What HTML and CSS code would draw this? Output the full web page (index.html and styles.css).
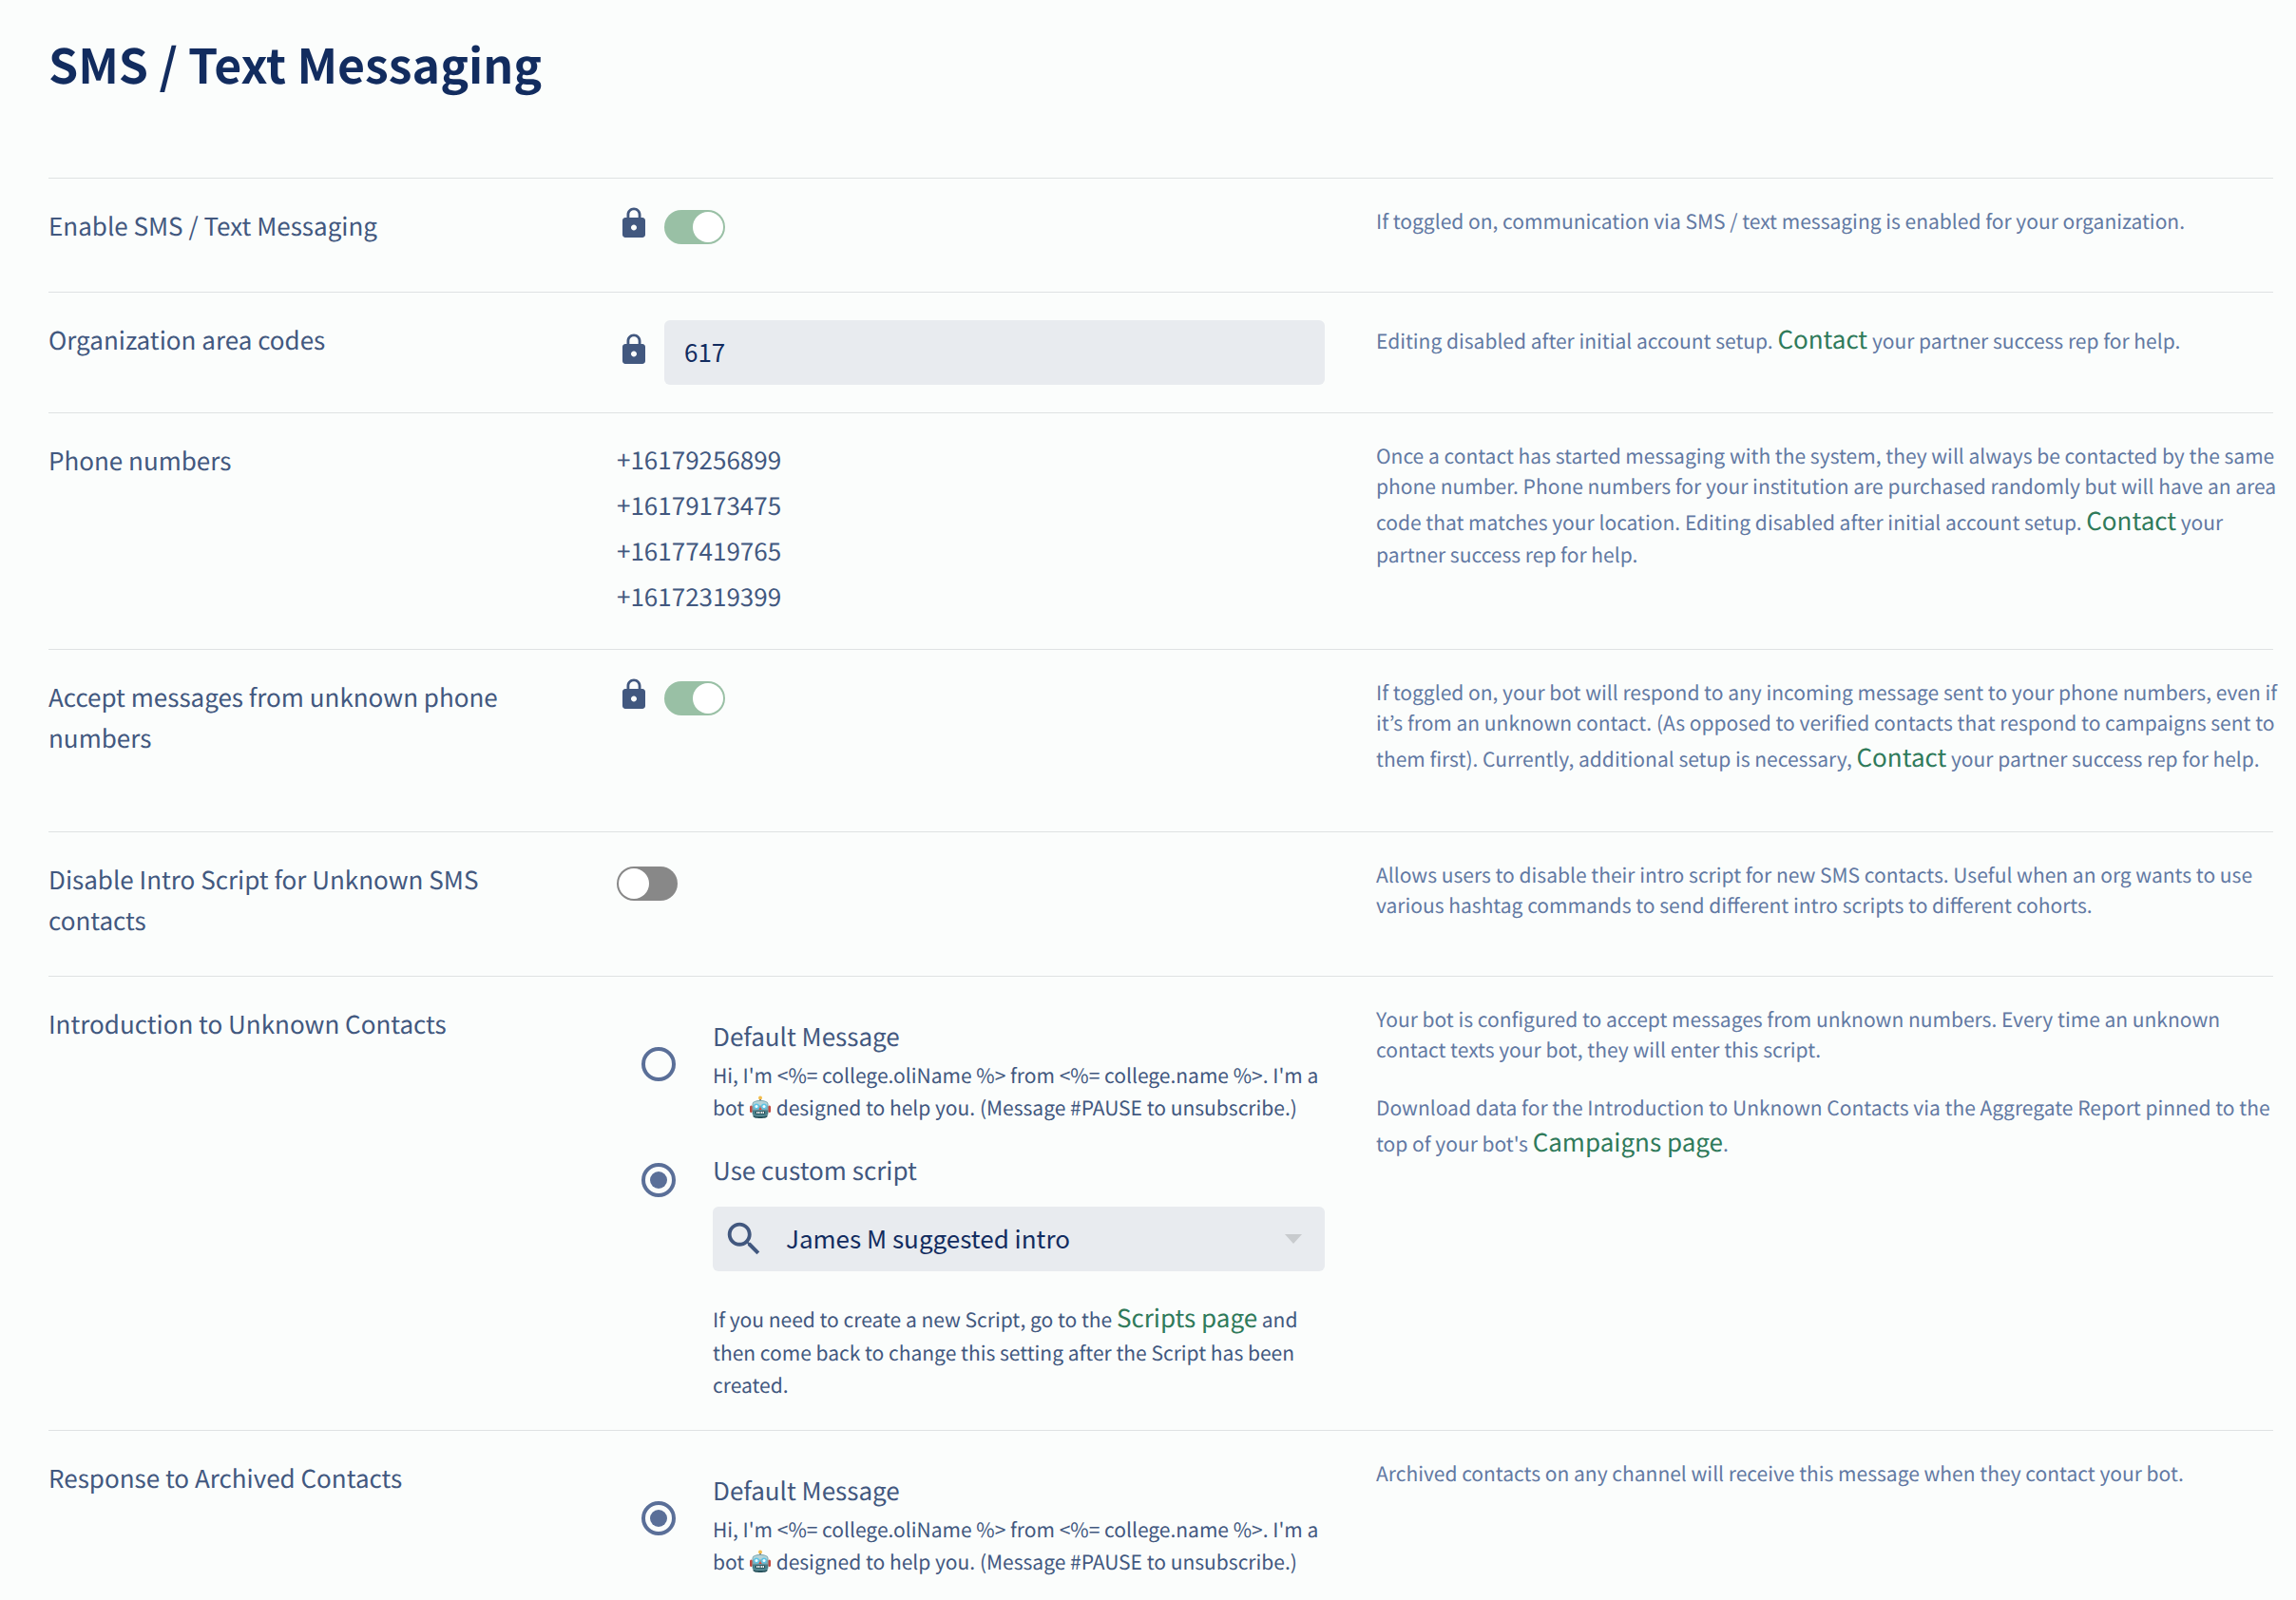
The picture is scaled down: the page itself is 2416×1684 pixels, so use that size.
FILE: index.html
```html
<!DOCTYPE html>
<html lang="en">
<head>
<meta charset="utf-8">
<meta name="viewport" content="width=device-width, initial-scale=1">
<title>SMS / Text Messaging</title>
<link rel="stylesheet" href="styles.css">
</head>
<body>
<svg class="sprite" aria-hidden="true">
  <symbol id="lock" viewBox="0 0 24 24"><path fill="currentColor" d="M18 8h-1V6c0-2.76-2.24-5-5-5S7 3.240 7 6v2H6c-1.100 0-2 .9-2 2v10c0 1.100.9 2 2 2h12c1.100 0 2-.9 2-2V10c0-1.100-.9-2-2-2zm-6 9c-1.100 0-2-.9-2-2s.9-2 2-2 2 .9 2 2-.9 2-2 2zm3.100-9H8.900V6c0-1.710 1.390-3.100 3.100-3.100s3.100 1.390 3.100 3.100v2z"/></symbol>
  <symbol id="search" viewBox="0 0 24 24"><path fill="currentColor" d="M15.500 14h-.79l-.28-.27C15.410 12.590 16 11.110 16 9.500 16 5.910 13.090 3 9.500 3S3 5.910 3 9.500 5.910 16 9.500 16c1.610 0 3.090-.59 4.230-1.570l.27.28v.79l5 4.990L20.490 19l-4.990-5zm-6 0C7.010 14 5 11.990 5 9.500S7.010 5 9.500 5 14 7.010 14 9.500 11.990 14 9.500 14z"/></symbol>
  <symbol id="robot" viewBox="0 0 44 48">
    <rect x="20" y="5" width="4" height="7" fill="#5b6b94"/>
    <circle cx="22" cy="5" r="4" fill="#f2bd4b"/>
    <rect x="0" y="21" width="6" height="15" rx="3" fill="#c4483f"/>
    <rect x="38" y="21" width="6" height="15" rx="3" fill="#c4483f"/>
    <path d="M7 40h30v4c0 2-5 4-15 4S7 46 7 44z" fill="#27535d"/>
    <path d="M5 19c0-6 6-9 17-9s17 3 17 9v19c0 4-5 6-17 6S5 42 5 38z" fill="#7fa9b1"/>
    <path d="M7 18c0-4 6-6 15-6s15 2 15 6v3H7z" fill="#b5d3d8"/>
    <path d="M6 31h32v7c0 3-5 5-16 5S6 41 6 38z" fill="#477f8a"/>
    <circle cx="14" cy="23" r="6" fill="#5fc3e4"/>
    <circle cx="30" cy="23" r="6" fill="#5fc3e4"/>
    <circle cx="14" cy="23" r="3" fill="#f4fdff"/>
    <circle cx="30" cy="23" r="3" fill="#f4fdff"/>
    <path d="M22 24l3 6h-6z" fill="#d8473c"/>
    <rect x="12" y="33" width="20" height="6" rx="2" fill="#24434b"/>
    <path d="M14 34h3v4h-3zM18 34h3v4h-3zM23 34h3v4h-3zM27 34h3v4h-3z" fill="#e6efef"/>
  </symbol>
</svg>

<main class="page">
  <h1 class="page-title">SMS / Text Messaging</h1>

  <section class="row">
    <label class="row-label" for="enable-sms">Enable SMS / Text Messaging</label>
    <div class="control locked">
      <svg class="lock" role="img" aria-label="Locked"><use href="#lock"/></svg>
      <input class="toggle" type="checkbox" role="switch" id="enable-sms" checked disabled>
    </div>
    <div class="help">
      <p>If toggled on, communication via SMS / text messaging is enabled for your organization.</p>
    </div>
  </section>

  <section class="row">
    <label class="row-label" for="area-codes">Organization area codes</label>
    <div class="control locked">
      <svg class="lock" role="img" aria-label="Locked"><use href="#lock"/></svg>
      <input class="field" type="text" id="area-codes" value="617" disabled>
    </div>
    <div class="help help-compact">
      <p>Editing disabled after initial account setup. <a href="#contact">Contact</a> your partner success rep for help.</p>
    </div>
  </section>

  <section class="row">
    <h2 class="row-label">Phone numbers</h2>
    <ul class="phones">
      <li>+16179256899</li>
      <li>+16179173475</li>
      <li>+16177419765</li>
      <li>+16172319399</li>
    </ul>
    <div class="help">
      <p>Once a contact has started messaging with the system, they will always be contacted by the same phone number. Phone numbers for your institution are purchased randomly but will have an area code that matches your location. Editing disabled after initial account setup. <a href="#contact">Contact</a> your partner success rep for help.</p>
    </div>
  </section>

  <section class="row">
    <label class="row-label" for="accept-unknown">Accept messages from unknown phone numbers</label>
    <div class="control locked">
      <svg class="lock" role="img" aria-label="Locked"><use href="#lock"/></svg>
      <input class="toggle" type="checkbox" role="switch" id="accept-unknown" checked disabled>
    </div>
    <div class="help">
      <p>If toggled on, your bot will respond to any incoming message sent to your phone numbers, even if it’s from an unknown contact. (As opposed to verified contacts that respond to campaigns sent to them first). Currently, additional setup is necessary, <a href="#contact">Contact</a> your partner success rep for help.</p>
    </div>
  </section>

  <section class="row">
    <label class="row-label" for="disable-intro">Disable Intro Script for Unknown SMS contacts</label>
    <div class="control control-single">
      <input class="toggle" type="checkbox" role="switch" id="disable-intro">
    </div>
    <div class="help">
      <p>Allows users to disable their intro script for new SMS contacts. Useful when an org wants to use various hashtag commands to send different intro scripts to different cohorts.</p>
    </div>
  </section>

  <section class="row">
    <h2 class="row-label">Introduction to Unknown Contacts</h2>
    <div class="options">
      <div class="option option-message">
        <input class="radio" type="radio" name="intro" id="intro-default">
        <label class="option-body" for="intro-default">
          <span class="option-title">Default Message</span>
          <span class="message">Hi, I'm &lt;%= college.oliName %&gt; from &lt;%= college.name %&gt;. I'm a bot <svg class="robot" role="img" aria-label="robot"><use href="#robot"/></svg> designed to help you. (Message #PAUSE to unsubscribe.)</span>
        </label>
      </div>
      <div class="option">
        <input class="radio" type="radio" name="intro" id="intro-custom" checked>
        <div class="option-body">
          <label class="option-title" for="intro-custom">Use custom script</label>
          <div class="picker">
            <svg class="search" aria-hidden="true"><use href="#search"/></svg>
            <select class="picker-select" aria-label="Custom script">
              <option>James M suggested intro</option>
            </select>
            <svg class="arrow" viewBox="0 0 18 10" aria-hidden="true"><path fill="currentColor" d="M0 0h18l-9 10z"/></svg>
          </div>
          <p class="message">If you need to create a new Script, go to the <a href="#scripts">Scripts page</a> and then come back to change this setting after the Script has been created.</p>
        </div>
      </div>
    </div>
    <div class="help">
      <p>Your bot is configured to accept messages from unknown numbers. Every time an unknown contact texts your bot, they will enter this script.</p>
      <p>Download data for the Introduction to Unknown Contacts via the Aggregate Report pinned to the top of your bot's <a href="#campaigns">Campaigns page</a>.</p>
    </div>
  </section>

  <section class="row row-last">
    <h2 class="row-label">Response to Archived Contacts</h2>
    <div class="options">
      <div class="option option-message">
        <input class="radio" type="radio" name="archived" id="archived-default" checked>
        <label class="option-body" for="archived-default">
          <span class="option-title">Default Message</span>
          <span class="message">Hi, I'm &lt;%= college.oliName %&gt; from &lt;%= college.name %&gt;. I'm a bot <svg class="robot" role="img" aria-label="robot"><use href="#robot"/></svg> designed to help you. (Message #PAUSE to unsubscribe.)</span>
        </label>
      </div>
    </div>
    <div class="help">
      <p>Archived contacts on any channel will receive this message when they contact your bot.</p>
    </div>
  </section>
</main>
</body>
</html>
```
FILE: styles.css
```css
* {
  box-sizing: border-box;
}

body {
  margin: 0;
  background: #fbfdfc;
  color: #42587f;
  font: 26px/43px "Noto Sans CJK KR", "Noto Sans", sans-serif;
  text-rendering: geometricPrecision;
}

h1, h2, p, ul {
  margin: 0;
  padding: 0;
}

a {
  color: #2f7a5a;
  font-size: 26px;
  line-height: 40px;
  text-decoration: none;
}

.sprite {
  display: none;
}

.page {
  padding: 30px 24px 0 51px;
}

.page-title {
  margin-bottom: 82px;
  color: #122c5f;
  font-size: 50px;
  line-height: 75px;
  font-weight: 700;
}

/* Rows: label, control, explanation */

.row {
  display: grid;
  grid-template-columns: 544fr 745fr 944fr;
  column-gap: 54px;
  align-items: start;
  padding-bottom: 29px;
  border-top: 1px solid #dfe2e3;
}

.row-last {
  padding-bottom: 0;
}

.row-label {
  padding-top: 28px;
  font-size: 26px;
  line-height: 43px;
  font-weight: 400;
}

.help {
  margin-right: -10px;
  padding-top: 29px;
  color: #6279a3;
  font-size: 21px;
  line-height: 32px;
}

.help p {
  margin-bottom: 29px;
}

.help-compact p {
  margin-bottom: 0;
}

.control {
  display: flex;
  align-items: center;
  padding-top: 29px;
}

.control-single {
  padding-top: 36px;
}

.locked {
  gap: 14px;
}

.lock {
  flex: none;
  width: 36px;
  height: 36px;
  margin-bottom: 7px;
}

.field {
  flex: 1;
  min-width: 0;
  height: 68px;
  padding: 0 21px 3px;
  border: 0;
  border-radius: 6px;
  background: #e8ebef;
  color: #122c5f;
  font: inherit;
}

.toggle {
  appearance: none;
  display: block;
  width: 64px;
  height: 36px;
  margin: 0;
  padding: 2px;
  border-radius: 18px;
  background: #888;
}

.toggle::before {
  content: "";
  display: block;
  width: 32px;
  height: 32px;
  border-radius: 50%;
  background: #fff;
}

.toggle:checked {
  background: #99c0a5;
}

.toggle:checked::before {
  margin-left: auto;
}

.phones {
  padding-top: 25px;
  padding-bottom: 2px;
  line-height: 48px;
  list-style: none;
}

/* Radio options */

.options {
  display: grid;
  gap: 27px;
  padding-top: 41px;
  padding-bottom: 1px;
}

.option {
  display: flex;
  gap: 39px;
  padding-left: 26px;
}

.option-body {
  flex: 1;
  min-width: 0;
}

.option-title {
  display: block;
}

.radio {
  appearance: none;
  flex: none;
  display: grid;
  place-items: center;
  width: 36px;
  height: 36px;
  margin: 14px 0 0;
  border: 4px solid #5a6f98;
  border-radius: 50%;
}

.radio:checked::before {
  content: "";
  width: 18px;
  height: 18px;
  border-radius: 50%;
  background: #5a6f98;
}

.option-message .radio {
  margin-top: 33px;
}

.message {
  display: block;
  font-size: 21px;
  line-height: 34px;
}

.option-message .message {
  padding-top: 3px;
}

.robot {
  width: 22px;
  height: 24px;
  margin: 0 1px;
  vertical-align: -3px;
}

.picker {
  display: flex;
  align-items: center;
  height: 68px;
  margin: 17px 0 29px;
  padding: 0 24px 0 10px;
  border-radius: 6px;
  background: #e8ebef;
}

.search {
  flex: none;
  width: 46px;
  height: 46px;
}

.picker-select {
  appearance: none;
  flex: 1;
  min-width: 0;
  height: 68px;
  padding: 0 0 4px 21px;
  border: 0;
  background: transparent;
  color: #122c5f;
  font: inherit;
}

.arrow {
  flex: none;
  width: 18px;
  height: 10px;
  color: #c8cbce;
}
```
